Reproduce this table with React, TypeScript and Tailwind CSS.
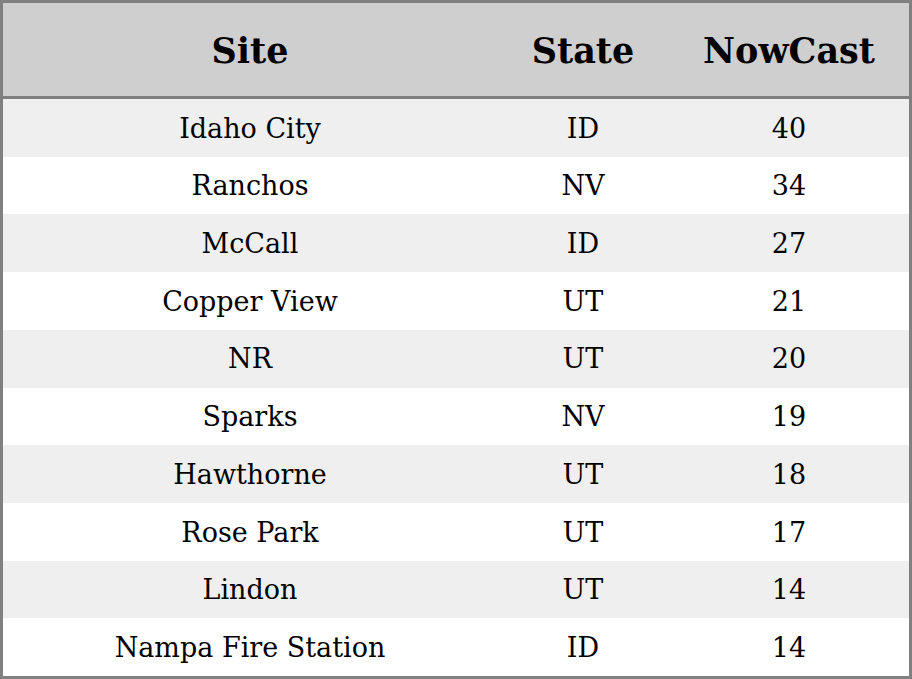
const rows: [string, string, number][] = [
  ["Idaho City", "ID", 40],
  ["Ranchos", "NV", 34],
  ["McCall", "ID", 27],
  ["Copper View", "UT", 21],
  ["NR", "UT", 20],
  ["Sparks", "NV", 19],
  ["Hawthorne", "UT", 18],
  ["Rose Park", "UT", 17],
  ["Lindon", "UT", 14],
  ["Nampa Fire Station", "ID", 14],
];

export default function App() {
  return (
    <div className="w-[912px] h-[679px] bg-white font-['DejaVu_Serif',serif] text-black">
      <div className="h-full border-[3px] border-[#808080] flex flex-col">
        <div className="h-[96px] pt-[3px] bg-[#cfcfcf] border-b-[3px] border-[#808080] flex items-center text-[35px] font-bold">
          <div className="w-[494px] text-center">Site</div>
          <div className="w-[172px] text-center">State</div>
          <div className="flex-1 text-center">NowCast</div>
        </div>
        <div className="flex-1 flex flex-col">
          {rows.map(([site, state, value], i) => (
            <div
              key={site}
              className={`flex-1 pt-[2px] flex items-center text-[27px] ${i % 2 === 0 ? "bg-[#efefef]" : "bg-white"}`}
            >
              <div className="w-[494px] text-center">{site}</div>
              <div className="w-[172px] text-center">{state}</div>
              <div className="flex-1 text-center">{value}</div>
            </div>
          ))}
        </div>
      </div>
    </div>
  );
}
